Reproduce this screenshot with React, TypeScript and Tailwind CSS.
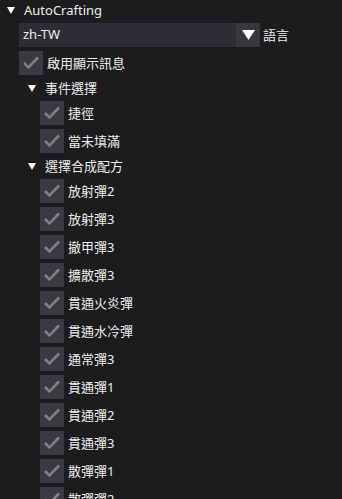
// AutoCrafting settings panel (ImGui style)

const recipes = [
  '放射彈2',
  '放射彈3',
  '撤甲彈3',
  '擴散彈3',
  '貫通火炎彈',
  '貫通水冷彈',
  '通常彈3',
  '貫通彈1',
  '貫通彈2',
  '貫通彈3',
  '散彈彈1',
  '散彈彈2',
];

function Arrow() {
  return (
    <svg width="8" height="7" viewBox="0 0 8 7" className="shrink-0">
      <polygon points="0,0 8,0 4,7" fill="#ffffff" />
    </svg>
  );
}

function TreeHeader({ label, indent }: { label: string; indent: string }) {
  return (
    <div className={`flex h-[18px] items-center ${indent}`}>
      <Arrow />
      <span className="ml-[9px] leading-none">{label}</span>
    </div>
  );
}

function Checkbox({ label, indent }: { label: string; indent: string }) {
  return (
    <div className={`flex h-6 items-center ${indent}`}>
      <div className="flex h-6 w-6 shrink-0 items-center justify-center bg-[#3a3a42]">
        <svg width="24" height="24" viewBox="0 0 24 24">
          <polyline
            points="5,12 9.5,16.5 19,6.5"
            fill="none"
            stroke="#7e7e84"
            strokeWidth="2.6"
          />
        </svg>
      </div>
      <span className="ml-1 leading-none">{label}</span>
    </div>
  );
}

export default function App() {
  return (
    <div
      className="h-[499px] w-full overflow-hidden bg-[#1c1c1e] text-[13px] text-[#ececec]"
      style={{ fontFamily: '"Noto Sans", "Noto Sans CJK TC", sans-serif' }}
    >
      <div className="flex flex-col gap-1 pt-[1px]">
        <TreeHeader label="AutoCrafting" indent="pl-[7px]" />

        {/* 語言選擇 */}
        <div className="flex h-6 items-center pl-[19px]">
          <div className="flex h-6 w-[241px]">
            <div className="flex flex-1 items-center bg-[#2d2d35] pl-1">zh-TW</div>
            <div className="flex w-6 items-center justify-center bg-[#38383c]">
              <svg width="13" height="10" viewBox="0 0 13 10">
                <polygon points="0,0 13,0 6.5,10" fill="#ffffff" />
              </svg>
            </div>
          </div>
          <span className="ml-[3px] leading-none">語言</span>
        </div>

        <Checkbox label="啟用顯示訊息" indent="pl-[19px]" />

        <TreeHeader label="事件選擇" indent="pl-[28px]" />
        <Checkbox label="捷徑" indent="pl-[40px]" />
        <Checkbox label="當未填滿" indent="pl-[40px]" />

        <TreeHeader label="選擇合成配方" indent="pl-[28px]" />
        {recipes.map((r) => (
          <Checkbox key={r} label={r} indent="pl-[40px]" />
        ))}
      </div>
    </div>
  );
}
